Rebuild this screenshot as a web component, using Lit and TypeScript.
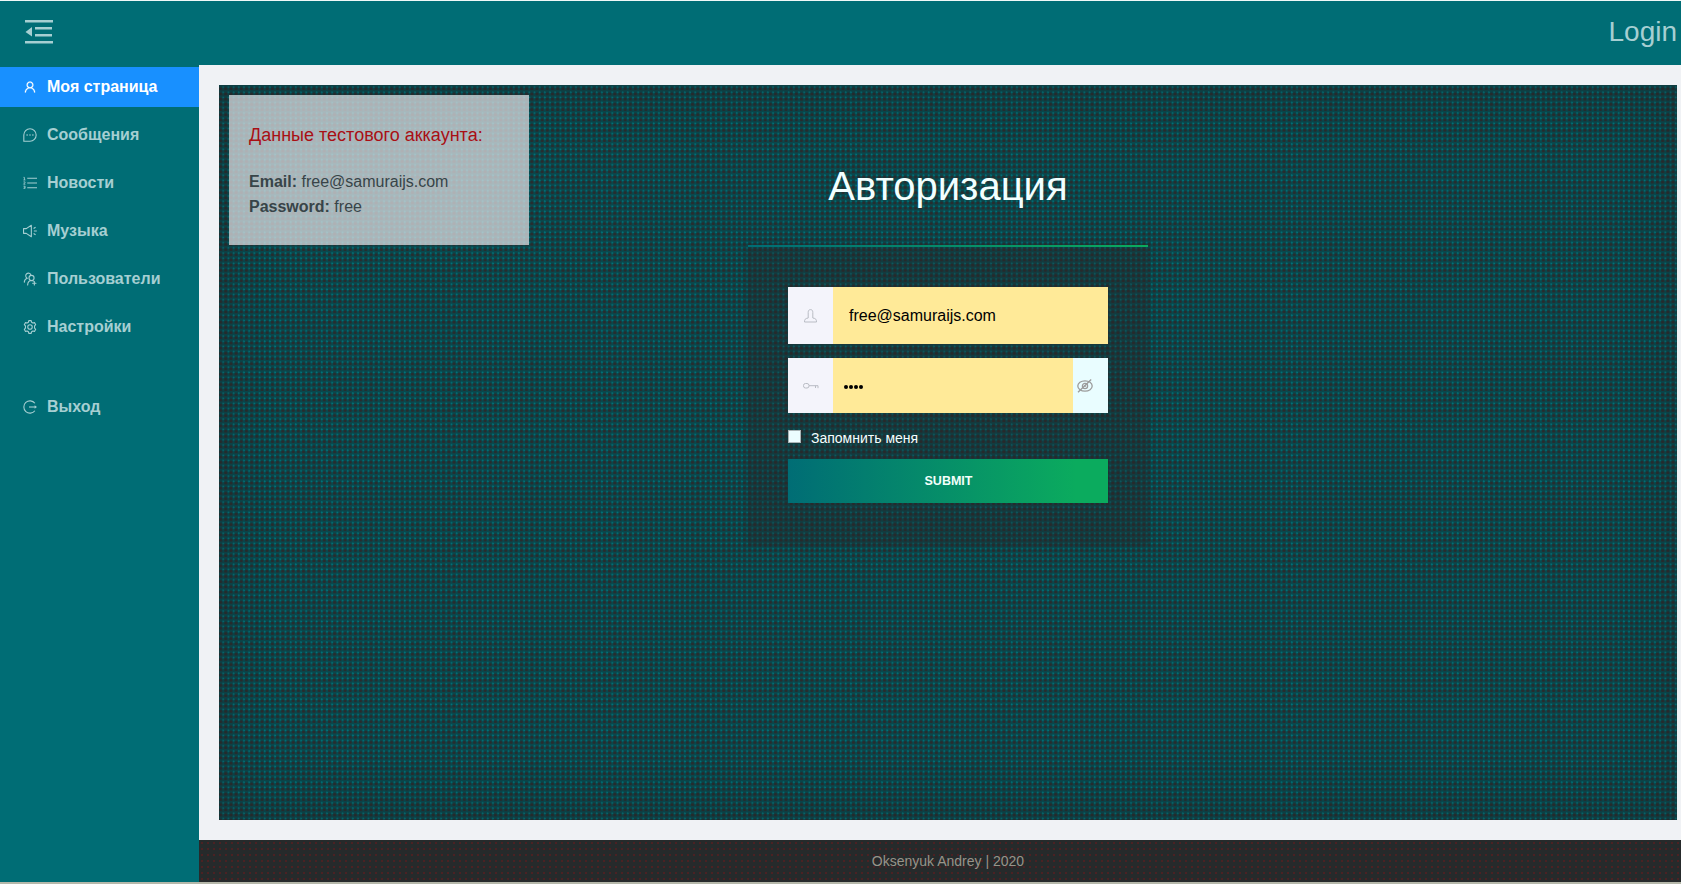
import { LitElement, html, css, svg } from "lit";
import { customElement, property } from "lit/decorators.js";

const glyphs: Record<string, unknown> = {
  fold: svg`<g fill="currentColor"><path d="M1 1h28v2.500H1zM11 8H28v2.500H11zM11 15H28v2.500H11zM1 22h28v2.500H1zM1.500 13 8 8v9.600z"/></g>`,
  user: svg`<path d="M858.5 763.6a374 374 0 0 0-80.6-119.5 375.63 375.63 0 0 0-119.5-80.6c-.4-.2-.8-.3-1.200-.5C719.500 518 760 444.700 760 362c0-137-111-248-248-248S264 225 264 362c0 82.700 40.500 156 102.800 201.100-.4.200-.8.300-1.200.500-44.800 18.900-85 46-119.500 80.600a375.630 375.630 0 0 0-80.600 119.500A371.700 371.700 0 0 0 136 901.800a8 8 0 0 0 8 8.200h60c4.400 0 7.900-3.500 8-7.800 2-77.200 33-149.500 87.800-204.300 56.700-56.700 132-87.900 212.200-87.900s155.500 31.200 212.200 87.900C779 752.700 810 825 812 902.200c.1 4.400 3.600 7.800 8 7.800h60a8 8 0 0 0 8-8.200c-1-47.800-10.900-94.300-29.500-138.200zM512 534c-45.900 0-89.100-17.900-121.600-50.400S340 407.900 340 362c0-45.900 17.900-89.100 50.400-121.600S466.100 190 512 190s89.100 17.900 121.600 50.400S684 316.100 684 362c0 45.900-17.900 89.100-50.400 121.600S557.900 534 512 534z" fill="currentColor" stroke="currentColor" stroke-width="16"/>`,
  message: svg`<g fill="none" stroke="currentColor" stroke-width="80"><path d="M60 964V512A452 452 0 1 1 512 964z"/></g><g fill="currentColor"><circle cx="300" cy="512" r="56"/><circle cx="512" cy="512" r="56"/><circle cx="724" cy="512" r="56"/></g>`,
  list: svg`<g fill="currentColor"><path d="M310 130h714v76H310zM310 474h714v76H310zM310 818h714v76H310z"/></g><g fill="none" stroke="currentColor" stroke-width="60"><path d="M35 100h68v190M30 292h150M35 432h115v50L40 600h135M35 744h120v160H35M65 820h80"/></g>`,
  sound: svg`<g fill="none" stroke="currentColor" stroke-width="80" stroke-linejoin="round"><path d="M40 340H240L610 95V929L240 684H40z"/><path d="M795 512H1010M775 325 920 235M775 700 920 790"/></g>`,
  group: svg`<g fill="none" stroke="currentColor" stroke-width="80" stroke-linecap="round"><path d="M95 740C100 600 180 500 300 450A195 195 0 1 1 580 225"/><circle cx="625" cy="435" r="185"/><path d="M340 945C350 760 460 625 625 620 690 620 735 640 780 670M830 700V950M705 825H950"/></g>`,
  gear: svg`<g fill="none" stroke="currentColor" stroke-width="80" stroke-linejoin="round"><path d="M395 165 425 45H599L629 165 720 220 840 190 930 345 845 432V592L930 679 840 834 720 804 629 859 599 979H425L395 859 304 804 184 834 94 679 179 592V432L94 345 184 190 304 220z"/><circle cx="512" cy="512" r="165"/></g>`,
  logout: svg`<g fill="none" stroke="currentColor" stroke-width="80"><path d="M870 240A450 450 0 1 0 870 784"/><path d="M440 512H880"/></g><path d="M850 380 1020 512 850 644z" fill="currentColor"/>`,
  person: svg`<g fill="none" stroke="currentColor" stroke-width="1"><path d="M4.200 9V3.500C4.200 1.500 5 .600 6.500.600S8.800 1.500 8.800 3.500V9C12 9.500 12.500 10.500 12.500 13H.5C.5 10.500 1 9.500 4.200 9z" stroke-linejoin="round"/></g>`,
  key: svg`<g fill="none" stroke="currentColor" stroke-width="1"><rect x=".5" y=".5" width="5.500" height="4.500" rx="2"/><path d="M6 2.700H15V5.200M12.500 2.700V5"/></g>`,
  eye: svg`<g fill="none" stroke="currentColor" stroke-width="1.300"><ellipse cx="8" cy="7" rx="7.200" ry="5.200"/><circle cx="8" cy="7" r="2.600"/><path d="M1 13.200 14.200.500"/></g><circle cx="8" cy="7" r="1" fill="currentColor"/>`,
};

@customElement("ui-icon")
export class UiIcon extends LitElement {
  @property() name = "user";
  @property() box = "0 0 1024 1024";
  static styles = css`
    :host { display: block; flex: none; width: 14px; height: 14px; }
    svg { display: block; width: 100%; height: 100%; overflow: visible; }
  `;
  render() {
    return html`<svg viewBox=${this.box} aria-hidden="true">${glyphs[this.name]}</svg>`;
  }
}

const menu = [
  { icon: "user", label: "Моя страница", active: true },
  { icon: "message", label: "Сообщения" },
  { icon: "list", label: "Новости" },
  { icon: "sound", label: "Музыка" },
  { icon: "group", label: "Пользователи" },
  { icon: "gear", label: "Настройки" },
  { icon: "logout", label: "Выход", apart: true },
];

@customElement("app-root")
export class AppRoot extends LitElement {
  static styles = css`
    :host {
      display: flex; flex-direction: column; box-sizing: border-box;
      width: 100%; height: 884px; overflow: hidden;
      border-top: 1px solid #f0f8f8; border-bottom: 2px solid #b5b8aa;
      background: #f0f2f5; font-family: "Liberation Sans", Arial, sans-serif;
    }
    * { box-sizing: border-box; }
    .header {
      flex: none; height: 64px; display: flex; justify-content: space-between; align-items: center;
      padding: 0 4px 2px 24px; background: #006d75; color: #a6cfd2;
    }
    .fold { width: 29px; height: 26px; }
    .login { font-size: 28px; line-height: 32px; }
    .body { flex: 1; min-height: 0; display: flex; }
    .side { flex: none; width: 199px; background: #006d75; padding-top: 2px; }
    .item {
      height: 40px; margin-bottom: 8px; padding-left: 23px; display: flex; align-items: center;
      gap: 10px; color: #a6cfd2; font-size: 16px; font-weight: 700;
    }
    .item span { margin-top: -1px; }
    .active { background: #1890ff; color: #fff; }
    .apart { margin-top: 40px; }
    .page { flex: 1; min-width: 0; display: flex; flex-direction: column; }
    .main {
      flex: 1; margin: 20px 4px 20px 20px; padding: 10px;
      display: grid; grid-template-columns: 1fr 400px 1fr; align-items: start;
      background:
        radial-gradient(circle at 80% 40%, #00737a 0 .6px, transparent 1.200px) 0 0 / 5.200px 5.200px,
        radial-gradient(circle at 30% 75%, #272d2f 0 1.200px, transparent 2px) 0 0 / 5.200px 5.200px,
        #0a474c;
      box-shadow: inset 0 0 50px rgba(32, 32, 34, .4);
    }
    .note {
      width: 300px; height: 150px; padding: 27px 20px; color: #384448;
      background: rgba(220, 222, 225, .75); font-size: 16px; line-height: 25px;
    }
    .note h2 { margin: 0 0 21px; font-size: 18px; font-weight: 400; line-height: 26px; color: #a90f14; }
    .note p { margin: 0; }
    .auth { padding-top: 68px; }
    .auth h1 {
      margin: 0; height: 82px; font-size: 40px; line-height: 46px; font-weight: 400;
      text-align: center; color: #f2ffff;
    }
    .form {
      height: 300px; padding: 40px 40px 0; border-top: 2px solid;
      border-image: linear-gradient(90deg, #006d75, #0bab5e) 1;
      background: rgba(36, 37, 40, .35); box-shadow: 0 0 5px rgba(36, 37, 40, .35);
      display: flex; flex-direction: column;
    }
    .field { display: flex; height: 57px; background: #ffea98; color: #000; font-size: 16px; }
    .secret { height: 55px; margin-top: 14px; }
    .addon { width: 45px; display: grid; place-items: center; background: #f4f4fb; color: #b9bcc4; }
    .person { width: 13px; height: 14px; }
    .key { width: 16px; height: 6px; }
    .value { flex: 1; display: flex; align-items: center; padding-left: 16px; }
    .dots { display: flex; align-items: center; flex: 1; gap: 1px; padding: 2px 0 0 11px; }
    .dots i { width: 4px; height: 4px; border-radius: 50%; background: #000; }
    .reveal { width: 35px; background: #e9fdff; color: #9c9c9c; display: flex; align-items: center; padding-left: 4px; }
    .eye { width: 16px; height: 14px; }
    .remember {
      display: flex; gap: 10px; height: 16px; margin: 17px 0 13px;
      font-size: 14px; line-height: 16px; color: #f5ffff;
    }
    .check { width: 13px; height: 13px; background: #ecfdff; border: 1px solid #a9b4b6; }
    .submit {
      height: 44px; border: 0; padding: 0 0 1px 1px; color: #f2fffa; font: 700 12.500px "Liberation Sans", Arial, sans-serif;
      background: linear-gradient(90deg, #006d75, #0bab5e 90%);
    }
    .footer {
      flex: none; height: 42px; display: flex; align-items: center; justify-content: center;
      padding-left: 16px; background-color: #262a2b; color: #96948a; font-size: 14px;
      background-image: radial-gradient(circle, #651c1d 0 .5px, transparent 1px);
      background-size: 6px 6px;
    }
  `;

  render() {
    return html`
      <header class="header">
        <ui-icon class="fold" name="fold" box="0 0 29 26"></ui-icon>
        <span class="login">Login</span>
      </header>
      <div class="body">
        <nav class="side">
          ${menu.map((m) => html`
            <div class="item ${m.active ? "active" : ""} ${m.apart ? "apart" : ""}">
              <ui-icon name=${m.icon}></ui-icon><span>${m.label}</span>
            </div>`)}
        </nav>
        <div class="page">
          <main class="main">
            <section class="note">
              <h2>Данные тестового аккаунта:</h2>
              <p><b>Email:</b> free@samuraijs.com</p>
              <p><b>Password:</b> free</p>
            </section>
            <section class="auth">
              <h1>Авторизация</h1>
              <div class="form">
                <div class="field">
                  <div class="addon"><ui-icon class="person" name="person" box="0 0 13 14"></ui-icon></div>
                  <div class="value">free@samuraijs.com</div>
                </div>
                <div class="field secret">
                  <div class="addon"><ui-icon class="key" name="key" box="0 0 16 6"></ui-icon></div>
                  <div class="dots"><i></i><i></i><i></i><i></i></div>
                  <div class="reveal"><ui-icon class="eye" name="eye" box="0 0 16 14"></ui-icon></div>
                </div>
                <label class="remember"><div class="check"></div><span>Запомнить меня</span></label>
                <button class="submit">SUBMIT</button>
              </div>
            </section>
          </main>
          <footer class="footer">Oksenyuk Andrey | 2020</footer>
        </div>
      </div>
    `;
  }
}
